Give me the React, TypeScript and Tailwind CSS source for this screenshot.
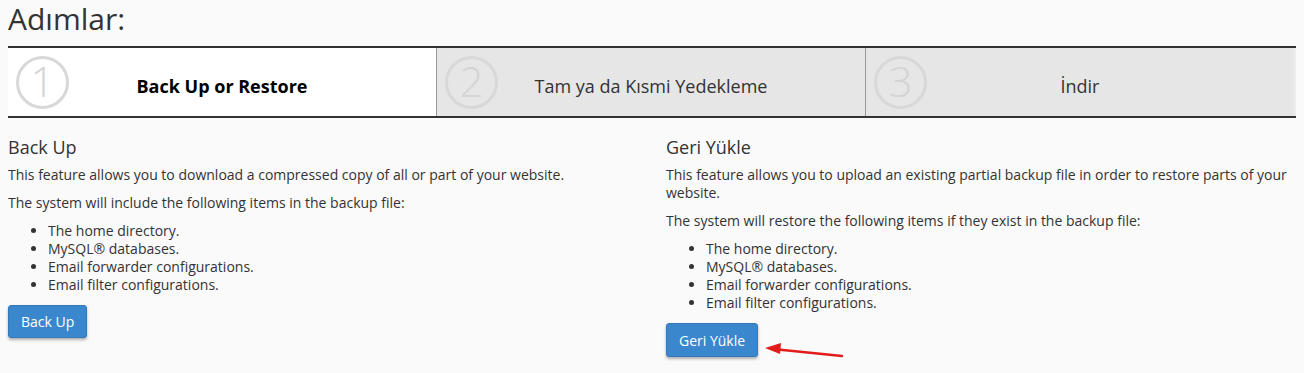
import React from "react";

const items = [
  "The home directory.",
  "MySQL® databases.",
  "Email forwarder configurations.",
  "Email filter configurations.",
];

function Step({ n, label, active }: { n: string; label: string; active?: boolean }) {
  return (
    <div
      className={
        "flex flex-1 items-center h-[68px] " +
        (active ? "bg-white" : "bg-[#e6e6e6]")
      }
    >
      <div className="w-[70px] pl-2 flex items-center">
        <div className="w-[53px] h-[53px] rounded-full border-[3px] border-[#d8d8d8] flex items-center justify-center text-[42px] leading-none font-light text-[#d4d4d4]">
          <span className="-mt-[2px]">{n}</span>
        </div>
      </div>
      <div
        className={
          "flex-1 text-center text-[18px] pt-[9px] " +
          (active ? "font-bold text-black" : "text-[#333]")
        }
      >
        {label}
      </div>
      <div className="w-[70px]" />
    </div>
  );
}

function List() {
  return (
    <ul className="list-disc pl-10 mt-[10px] text-[14px] leading-[18px] marker:text-[#333]">
      {items.map((t) => (
        <li key={t}>{t}</li>
      ))}
    </ul>
  );
}

export default function App() {
  return (
    <div
      className="min-h-screen bg-[#fafafa] text-[#333] pt-[1px]"
      style={{ fontFamily: '"Open Sans", "Noto Sans", sans-serif' }}
    >
      <h1 className="px-2 text-[30px] leading-[36px] font-normal">Adımlar:</h1>
      <div className="mx-2 mt-[9px] border-y-2 border-[#333] flex">
        <Step n="1" label="Back Up or Restore" active />
        <div className="w-[1px] bg-[#999]" />
        <Step n="2" label="Tam ya da Kısmi Yedekleme" />
        <div className="w-[1px] bg-[#999]" />
        <Step n="3" label="İndir" />
        <div className="w-[2px] bg-[#ececec]" />
      </div>
      <div className="grid grid-cols-2 gap-[28px] px-2 mt-[19px]">
        <div>
          <h2 className="text-[18px] leading-[20px] mb-[9px]">Back Up</h2>
          <p className="text-[14px] leading-[18px]">
            This feature allows you to download a compressed copy of all or part of your website.
          </p>
          <p className="text-[14px] leading-[18px] mt-[10px]">
            The system will include the following items in the backup file:
          </p>
          <List />
          <button className="mt-[11px] h-[33px] px-[12px] rounded-[3px] bg-[#3a87ce] border border-[#3479bb] text-white text-[14px] shadow-[0_2px_3px_rgba(0,0,0,0.3)]">
            Back Up
          </button>
        </div>
        <div>
          <h2 className="text-[18px] leading-[20px] mb-[9px]">Geri Yükle</h2>
          <p className="text-[14px] leading-[18px]">
            This feature allows you to upload an existing partial backup file in order to restore parts of your website.
          </p>
          <p className="text-[14px] leading-[18px] mt-[10px]">
            The system will restore the following items if they exist in the backup file:
          </p>
          <List />
          <div className="flex items-start mt-[11px]">
            <button className="h-[34px] px-[12px] rounded-[3px] bg-[#3a87ce] border border-[#3479bb] text-white text-[14px] shadow-[0_2px_3px_rgba(0,0,0,0.3)]">
              Geri Yükle
            </button>
            <svg width="90" height="40" viewBox="0 0 90 40" className="ml-[2px]">
              <line x1="18" y1="26.5" x2="82" y2="33" stroke="#e21b1b" strokeWidth="2.5" strokeLinecap="round" />
              <polygon points="5,25 21,20 20,31" fill="#e21b1b" />
            </svg>
          </div>
        </div>
      </div>
    </div>
  );
}
